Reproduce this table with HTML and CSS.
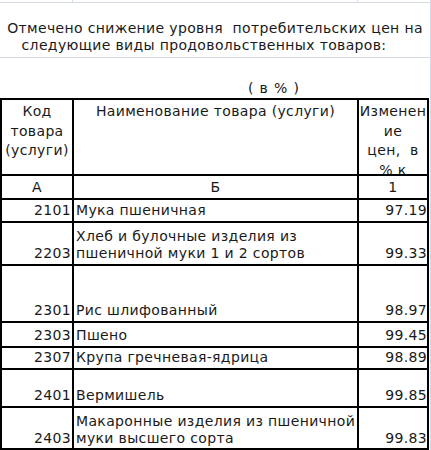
FILE: index.html
```html
<!DOCTYPE html>
<html lang="ru">
<head>
<meta charset="utf-8">
<title>Снижение цен</title>
<link rel="stylesheet" href="styles.css">
</head>
<body>
<div class="sheet">
  <div class="toprow"><div class="gc gc1"></div><div class="gc gc2"></div><div class="gc gc3"></div></div>
  <div class="title">
    <div class="tline">Отмечено снижение уровня&nbsp; потребительских цен на</div>
    <div class="tline tline2">следующие виды продовольственных товаров:</div>
  </div>
  <div class="unit"><span class="unit-text">( в % )</span></div>
  <div class="table">
    <div class="c hd">Код<br>товара<br>(услуги)</div>
    <div class="c hd">Наименование товара (услуги)</div>
    <div class="c hd">Изменен<br>ие<br>цен,&nbsp; в<br>% к</div>

    <div class="c ab">А</div>
    <div class="c ab">Б</div>
    <div class="c ab">1</div>

    <div class="c code">2101</div>
    <div class="c name">Мука пшеничная</div>
    <div class="c val">97.19</div>

    <div class="c code">2203</div>
    <div class="c name">Хлеб и булочные изделия из<br>пшеничной муки 1 и 2 сортов</div>
    <div class="c val">99.33</div>

    <div class="c code">2301</div>
    <div class="c name">Рис шлифованный</div>
    <div class="c val">98.97</div>

    <div class="c code">2303</div>
    <div class="c name">Пшено</div>
    <div class="c val">99.45</div>

    <div class="c code">2307</div>
    <div class="c name">Крупа гречневая-ядрица</div>
    <div class="c val">98.89</div>

    <div class="c code">2401</div>
    <div class="c name">Вермишель</div>
    <div class="c val">99.85</div>

    <div class="c code last">2403</div>
    <div class="c name last">Макаронные изделия из пшеничной<br>муки высшего сорта</div>
    <div class="c val last">99.83</div>
  </div>
</div>
</body>
</html>
```

FILE: styles.css
```css
html, body {
  margin: 0;
  padding: 0;
  background: #fff;
}
body {
  font-family: "DejaVu Sans", Verdana, sans-serif;
  font-size: 14px;
  letter-spacing: 0.35px;
  color: #1a1a1a;
  width: 431px;
  height: 450px;
  overflow: hidden;
}
.sheet {
  width: 430px;
  border-right: 1px solid #d4dbe6;
}
.toprow {
  height: 2px;
  border-bottom: 1px solid #d4dbe6;
  display: grid;
  grid-template-columns: 73px 285px 72px;
}
.gc1, .gc2 {
  border-right: 1px solid #d4dbe6;
}
.title {
  box-sizing: border-box;
  height: 55px;
  border-bottom: 1px solid #d4dbe6;
  display: flex;
  flex-direction: column;
  justify-content: flex-end;
  align-items: center;
  padding-bottom: 3px;
  line-height: 17px;
  white-space: nowrap;
}
.tline2 {
  padding-right: 22px;
}
.unit {
  box-sizing: border-box;
  height: 40px;
  display: flex;
  align-items: flex-end;
  padding-left: 248px;
  padding-bottom: 1px;
  line-height: 17px;
  word-spacing: 1px;
}
.table {
  width: 429px;
  box-sizing: border-box;
  background: #000;
  padding: 2px;
  display: grid;
  grid-template-columns: 70px 283px 68px;
  grid-template-rows: 74px 22px 21px 41px 55px 23px 20px 36px 40px;
  gap: 2px;
}
.c {
  background: #fff;
  overflow: hidden;
  white-space: nowrap;
  line-height: 17px;
}
.hd {
  text-align: center;
  line-height: 19.5px;
  padding-top: 2px;
}
.ab {
  display: flex;
  align-items: center;
  justify-content: center;
}
.code, .name, .val {
  display: flex;
  flex-direction: column;
  justify-content: flex-end;
  padding-bottom: 2px;
}
.code {
  text-align: right;
  padding-right: 1px;
}
.name {
  padding-left: 2px;
}
.val {
  text-align: right;
  padding-right: 0;
}
.last {
  padding-bottom: 1px;
}
```
